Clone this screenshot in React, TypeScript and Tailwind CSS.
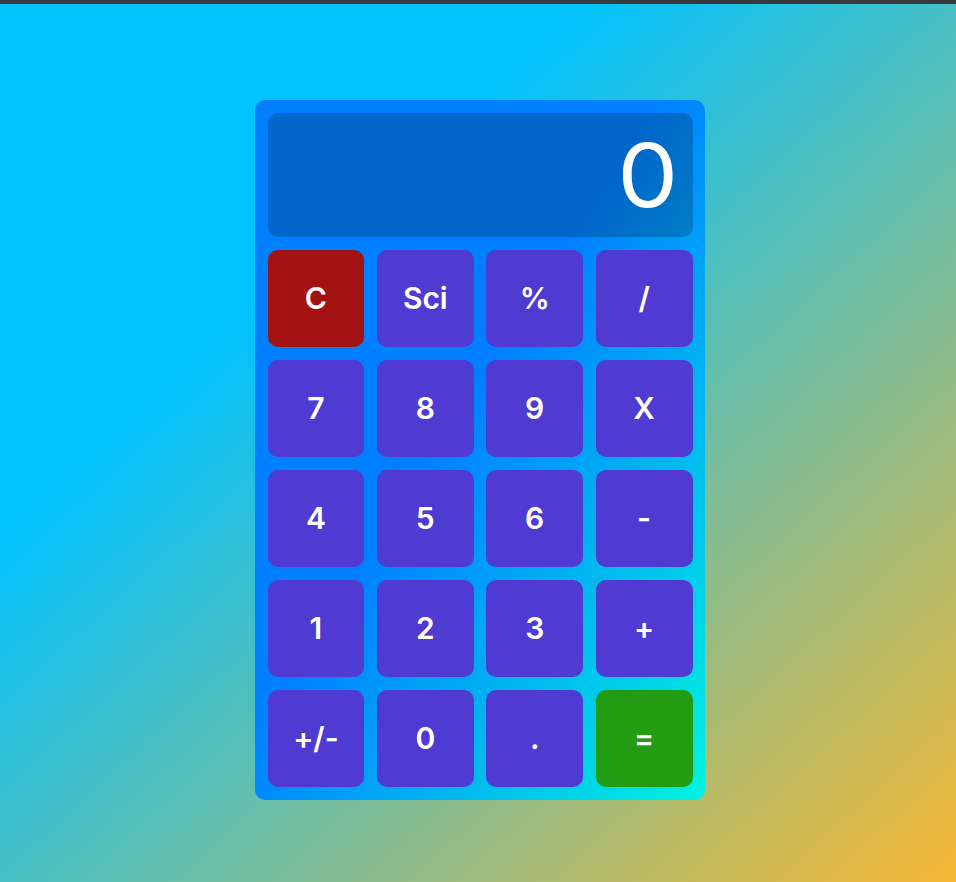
import React from "react";

type Key = { label: string; tone?: "clear" | "equals" };

const keys: Key[] = [
  { label: "C", tone: "clear" },
  { label: "Sci" },
  { label: "%" },
  { label: "/" },
  { label: "7" },
  { label: "8" },
  { label: "9" },
  { label: "X" },
  { label: "4" },
  { label: "5" },
  { label: "6" },
  { label: "-" },
  { label: "1" },
  { label: "2" },
  { label: "3" },
  { label: "+" },
  { label: "+/-" },
  { label: "0" },
  { label: "." },
  { label: "=", tone: "equals" },
];

const App: React.FC = () => {
  return (
    <div className="w-[956px] h-[882px] flex flex-col font-['Inter','Liberation_Sans',sans-serif]">
      {/* browser chrome strip */}
      <div className="h-1 bg-[#37393d] shrink-0" />

      <main className="flex-1 flex justify-center pl-[4px] pt-[96px] bg-[linear-gradient(to_bottom_right,#00c3ff_30%,#f7b733)]">
        <div className="w-[450px] h-[700px] rounded-[10px] p-[12.5px] flex flex-col gap-[13px] bg-[linear-gradient(to_bottom_right,#0080ff_45%,#00f3df)]">
          {/* Display */}
          <div className="h-[124px] rounded-[10px] bg-black/20 flex items-center justify-end pr-[12px]">
            <span className="text-[88px] leading-none text-white font-normal tracking-wide scale-x-110 origin-right">0</span>
          </div>

          {/* Keypad */}
          <div className="grid grid-cols-4 gap-x-[12.6px] gap-y-[13px]">
            {keys.map((k) => (
              <button
                key={k.label}
                className={`h-[97px] rounded-[10px] text-white text-[30px] font-semibold flex items-center justify-center ${
                  k.tone === "clear"
                    ? "bg-[#a21212]"
                    : k.tone === "equals"
                    ? "bg-[#229c12]"
                    : "bg-[#4f3bd1]"
                }`}
              >
                {k.label}
              </button>
            ))}
          </div>
        </div>
      </main>
    </div>
  );
};

export default App;
